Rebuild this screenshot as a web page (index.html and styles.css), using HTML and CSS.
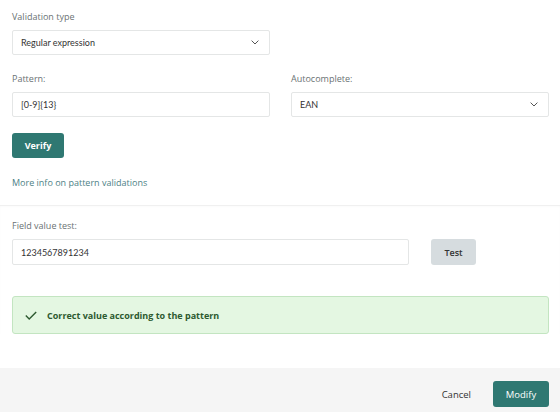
FILE: index.html
```html
<!DOCTYPE html>
<html lang="en">
<head>
<meta charset="utf-8">
<link rel="stylesheet" href="styles.css">
</head>
<body>
<div class="modal">
  <div class="body">
    <section class="section">
      <div class="field">
        <label class="label">Validation type</label>
        <div class="control select half">
          <span class="value">Regular expression</span>
          <svg class="chev" width="8" height="5" viewBox="0 0 8 5"><path d="M0.6 0.6 L4 4 L7.4 0.6" fill="none" stroke="#555" stroke-width="1"/></svg>
        </div>
      </div>
      <div class="row">
        <div class="field col">
          <label class="label">Pattern:</label>
          <div class="control"><span class="value">[0-9]{13}</span></div>
        </div>
        <div class="field col">
          <label class="label">Autocomplete:</label>
          <div class="control select">
            <span class="value">EAN</span>
            <svg class="chev" width="8" height="5" viewBox="0 0 8 5"><path d="M0.6 0.6 L4 4 L7.4 0.6" fill="none" stroke="#555" stroke-width="1"/></svg>
          </div>
        </div>
      </div>
      <button class="btn primary verify">Verify</button>
      <a class="link" href="#">More info on pattern validations</a>
    </section>
    <section class="section test">
      <label class="label">Field value test:</label>
      <div class="test-row">
        <div class="control test-input"><span class="value">1234567891234</span></div>
        <button class="btn secondary">Test</button>
      </div>
      <div class="alert">
        <svg class="check" width="12" height="9" viewBox="0 0 12 9"><path d="M0.8 4.6 L4.2 8 L11.2 1" fill="none" stroke="#2d5a30" stroke-width="1.4"/></svg>
        <span>Correct value according to the pattern</span>
      </div>
    </section>
  </div>
  <footer class="footer">
    <button class="btn plain">Cancel</button>
    <button class="btn primary modify">Modify</button>
  </footer>
</div>
</body>
</html>
```
FILE: styles.css
```css
* { box-sizing: border-box; }
html, body { margin: 0; padding: 0; background: #fff; }
body { font-family: "Open Sans", sans-serif; color: #333; width: 560px; height: 412px; overflow: hidden; }
.modal { display: flex; flex-direction: column; height: 412px; }
.body { flex: 1; }
.section { padding: 10px 11px 0 12px; }
.field { display: flex; flex-direction: column; }
.label { font-size: 9px; line-height: 14px; color: #6a7273; margin-bottom: 6px; }
.control {
  height: 25px; border: 1px solid #e4e6e6; border-radius: 2px; background: #fff;
  display: flex; align-items: center; padding: 0 8px;
  font-family: Lato, sans-serif; font-size: 9px; color: #333;
}
.select { justify-content: space-between; padding-right: 10px; }
.half { width: 258px; }
.row { display: flex; gap: 21px; margin-top: 17px; }
.col { flex: 1; }
.btn { font-family: "Open Sans", sans-serif; border: 0; border-radius: 3px; cursor: pointer; font-size: 9px; padding: 0; }
.primary { background: #2f7872; color: #fff; }
.verify { display: block; width: 52px; height: 25px; margin-top: 16px; font-weight: 700; }
.link { display: block; margin-top: 18px; font-size: 9px; line-height: 14px; color: #4d7f86; text-decoration: none; }
.test { margin-top: 15px; border-top: 1px solid #f0f0f0; box-shadow: inset 0 1px 2px rgba(0,0,0,0.02); padding-top: 13px; }
.test .label { display: block; }
.test-row { display: flex; gap: 22px; align-items: center; }
.test-input { width: 397px; height: 26px; }
.secondary { background: #d6dcdf; color: #333; width: 45px; height: 26px; font-weight: 600; }
.alert {
  margin-top: 31px; height: 38px; background: #e4f7e2; border: 1px solid #c3e5c1; border-radius: 3px;
  display: flex; align-items: center; padding-left: 12px; gap: 10px;
  font-size: 9px; font-weight: 700; color: #2d5a30;
}
.footer {
  height: 44px; background: #f5f5f5; display: flex; justify-content: flex-end; align-items: flex-start;
  padding: 13px 11px 0 0; gap: 22px;
}
.plain { background: transparent; color: #333; height: 26px; font-size: 9.5px; }
.modify { width: 56px; height: 26px; font-size: 9.5px; }
```
